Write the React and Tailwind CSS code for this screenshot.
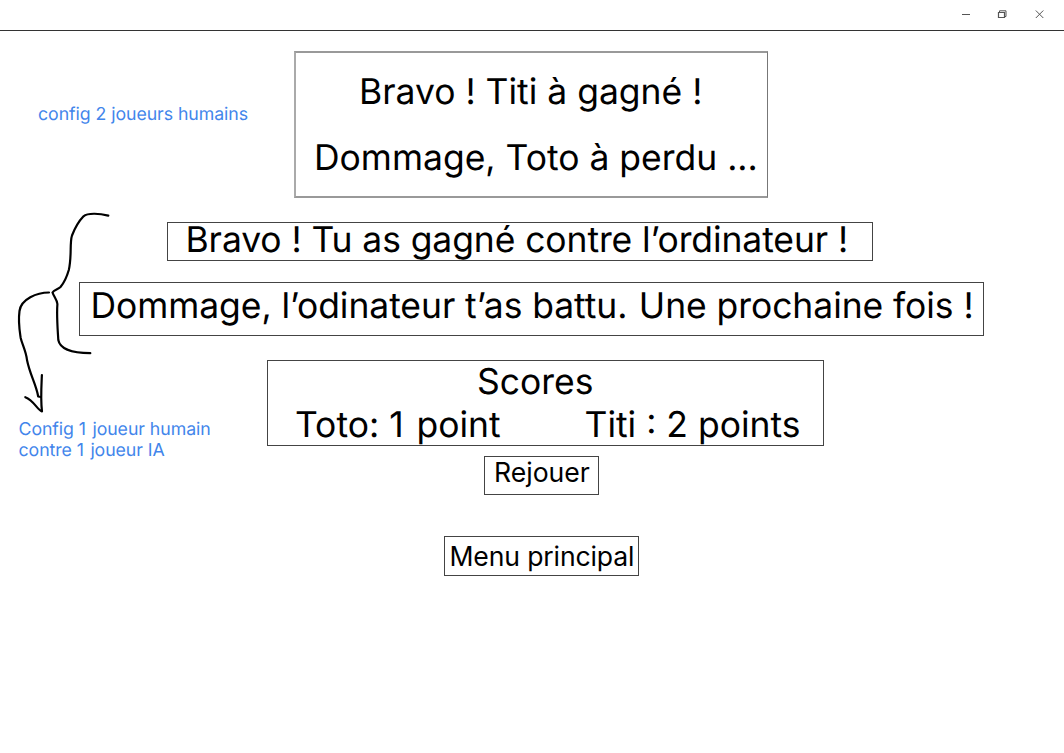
import React from "react";

const message = "text-[35.47px] whitespace-pre";
const frame = "border border-[#444]";

function TitleBar() {
  return (
    <header className="flex h-[31px] w-full items-start justify-end border-b border-[#333] pt-[9px] pr-[20px]">
      <svg width="84" height="11" viewBox="0 0 84 11" fill="none" stroke="#555" strokeWidth="1" aria-hidden="true">
        <path d="M2 5.500H10" />
        <path d="M38.500 3.500H44.500V8.500H38.500Z" strokeWidth="1.200" />
        <path d="M39.500 3.500V1.800H46V7.500H44.500" />
        <path d="M75.800 1.500L83.300 9M83.300 1.500L75.800 9" />
      </svg>
    </header>
  );
}

function Bracket() {
  return (
    <svg
      className="pointer-events-none absolute top-[200px] left-0"
      width="130"
      height="220"
      viewBox="0 200 130 220"
      fill="none"
      stroke="#000"
      strokeWidth="2.200"
      strokeLinecap="round"
      strokeLinejoin="round"
      aria-hidden="true"
    >
      <path d="M108.300 215.600C100 213.600 88 212.500 83.500 216.300C80 220 74.500 229 72 235.500C69.500 243 72 256 68.800 270C66.500 278 63 284 60.500 287C58 289.500 54 290 52.500 292.500C54 297 57.300 300 57.400 304C56.500 316 57.600 328 58.300 340C60 349 72 353 90.300 353.200" />
      <path d="M49 292.500C37 292.500 21 299 19.500 311C18 322 19.500 330 20.700 338C22 344 26 351 27 360C30 375 36 384 38.200 396.500L40.700 397" />
      <path d="M41.900 375C41.300 388 40.500 400 42 411.500C37 409.500 34 400.500 25.300 397.200" />
    </svg>
  );
}

export default function App() {
  return (
    <div className="relative flex h-[753px] w-[1064px] flex-col overflow-hidden bg-white font-['Inter',sans-serif] text-black [text-rendering:geometricPrecision]">
      <TitleBar />
      <main className="flex flex-col items-start">
        <section className="mt-[20px] flex items-start">
          <p className="mt-[53px] ml-[38px] w-[256px] text-[17.73px] leading-[21.5px] tracking-[-0.06px] text-[#4285eb]">
            config 2 joueurs humains
          </p>
          <div className="h-[147px] w-[474px] border-y-2 border-r border-l-2 border-[#999] border-r-[#777] border-l-[#aaa] pt-[17px]">
            <p className={`${message} pl-[63px] leading-[43px]`}>Bravo ! Titi à gagné !</p>
            <p className={`${message} mt-[23px] pl-[18px] leading-[43px]`}>Dommage, Toto à perdu ...</p>
          </div>
        </section>
        <p className={`${message} ${frame} mt-[24px] ml-[167px] h-[39px] w-[706px] pl-[17.500px] leading-[33px] tracking-[-0.09px]`}>
          Bravo ! Tu as gagné contre l’ordinateur !
        </p>
        <p className={`${message} ${frame} mt-[21px] ml-[79px] h-[54px] w-[905px] pt-[1px] pl-[10.500px] leading-[43px] tracking-[-0.06px]`}>
          Dommage, l’odinateur t’as <span className="mr-[1.500px]">battu.</span> Une prochaine fois !
        </p>
        <section className="mt-[24px] flex h-[86px] items-start">
          <p className="mt-[58px] ml-[18.500px] w-[248.500px] text-[17.73px] leading-[21.4px] tracking-[-0.06px] text-[#4285eb]">
            <span className="block pt-px">
              Config <span className="mr-[1.500px]">1</span> joueur humain
            </span>
            <span className="block">
              contre <span className="mr-[1.500px]">1</span> joueur IA
            </span>
          </p>
          <div className={`${frame} h-[86px] w-[557px]`}>
            <p className={`${message} pl-[209px] leading-[42px]`}>Scores</p>
            <div className="flex">
              <p className={`${message} w-[289px] pl-[27px] leading-[43px]`}>
                Toto: <span className="mr-[3px]">1</span> point
              </p>
              <p className={`${message} pl-[27.500px] leading-[43px]`}>Titi : 2 points</p>
            </div>
          </div>
        </section>
        <button className={`${frame} mt-[10px] ml-[484px] flex h-[39px] w-[115px] items-start pl-[9px] text-[26.6px] leading-[30px]`}>
          Rejouer
        </button>
        <button className={`${frame} mt-[41px] ml-[444px] h-[40px] w-[195px] pl-[4.500px] text-left text-[26.6px] leading-[32px] tracking-[-0.15px] whitespace-nowrap`}>
          Menu principal
        </button>
      </main>
      <Bracket />
    </div>
  );
}
